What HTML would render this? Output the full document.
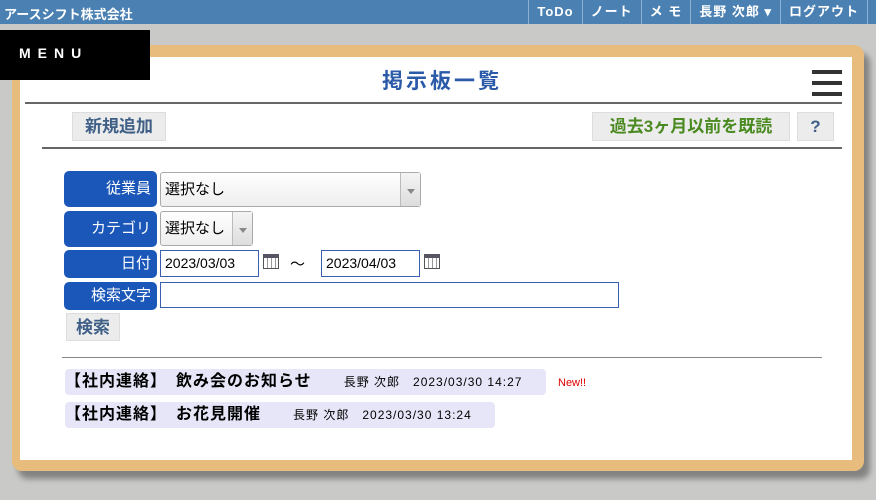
<!DOCTYPE html><html><head><meta charset="utf-8"><style>
*{margin:0;padding:0;box-sizing:border-box}
body{width:876px;height:500px;overflow:hidden;background:#c9c9c7;font-family:"Liberation Sans","Noto Sans CJK JP",sans-serif;position:relative}
.top{position:absolute;left:0;top:0;width:876px;height:24px;background:#4a80b2;color:#fff;font-size:13px;font-weight:bold}
.top .l{position:absolute;left:4px;top:4px}
.nav{position:absolute;right:0;top:0;display:flex;height:24px}
.nav div{border-left:1px solid #8fb0d0;padding:0 8px;line-height:24px;letter-spacing:1px}
.menu{position:absolute;left:0;top:30px;width:150px;height:50px;background:#000;color:#fff;font-weight:bold;font-size:14px;letter-spacing:7px;padding:15px 0 0 19px;z-index:3}
.card{position:absolute;left:12px;top:45px;width:852px;height:426px;background:#e8bc7c;border-radius:10px;box-shadow:6px 8px 6px rgba(0,0,0,.35)}
.in{position:absolute;left:20px;top:57px;width:832px;height:403px;background:#fff}
.abs{position:absolute}
.btn{background:#ececec;border:1px solid #ddd;font-weight:bold;font-size:17px;color:#3f5f86;text-align:center}
.lab{position:absolute;left:64px;width:93px;background:#1a57b8;color:#fff;border-radius:5px;text-align:right;padding-right:6px;font-size:15px}
.sel{position:absolute;border:1px solid #aaa;border-radius:3px;background:linear-gradient(#fff,#eee);font-size:15px;padding-left:4px}
.sel i{position:absolute;right:0;top:0;bottom:0;width:20px;border-left:1px solid #bbb;background:linear-gradient(#f4f4f4,#ddd)}
.sel i:after{content:"";position:absolute;left:6px;top:48%;border:4px solid transparent;border-top:5px solid #888}
.inp{position:absolute;border:1px solid #3a5fb0;font-size:14px;padding-left:4px;line-height:24px}
.item{position:absolute;left:65px;background:#e6e6f8;border-radius:4px;height:26px;font-size:16px;line-height:26px;white-space:nowrap;letter-spacing:1px}
.item s{text-decoration:none;font-size:12px;letter-spacing:1px}
.cal{position:absolute;width:16px;height:15px;border:1px solid #555;border-top:4px solid #556;background:repeating-linear-gradient(90deg,#fff 0 3px,#999 3px 4px)}
</style></head><body>
<div class="top"><span class="l">アースシフト株式会社</span>
<div class="nav"><div>ToDo</div><div>ノート</div><div>メ モ</div><div>長野 次郎 ▾</div><div>ログアウト</div><div style="padding:0 4px"></div></div></div>
<div class="menu">MENU</div>
<div class="card"></div>
<div class="in"></div>
<div class="abs" style="left:0;width:884px;top:65px;text-align:center;font-size:21px;font-weight:bold;color:#2b5ba8;letter-spacing:3px">掲示板一覧</div>
<div class="abs" style="left:812px;top:70px;width:30px;height:4px;background:#333;box-shadow:0 11px 0 #333,0 22px 0 #333"></div>
<div class="abs" style="left:25px;top:102px;width:817px;height:2px;background:#666"></div>
<div class="abs btn" style="left:72px;top:112px;width:94px;height:29px;line-height:28px">新規追加</div>
<div class="abs btn" style="left:592px;top:112px;width:198px;height:29px;line-height:28px;color:#4a8a20">過去3ヶ月以前を既読</div>
<div class="abs btn" style="left:797px;top:112px;width:37px;height:29px;line-height:28px">?</div>
<div class="abs" style="left:42px;top:147px;width:800px;height:2px;background:#666"></div>
<div class="lab" style="top:171px;height:36px;line-height:36px">従業員</div>
<div class="sel" style="left:160px;top:172px;width:261px;height:35px;line-height:34px">選択なし<i></i></div>
<div class="lab" style="top:211px;height:36px;line-height:36px">カテゴリ</div>
<div class="sel" style="left:160px;top:211px;width:93px;height:35px;line-height:34px">選択なし<i></i></div>
<div class="lab" style="top:250px;height:28px;line-height:28px">日付</div>
<div class="inp" style="left:160px;top:250px;width:99px;height:27px">2023/03/03</div>
<div class="cal" style="left:263px;top:254px"></div>
<div class="abs" style="left:290px;top:253px;font-size:15px">～</div>
<div class="inp" style="left:321px;top:250px;width:99px;height:27px">2023/04/03</div>
<div class="cal" style="left:424px;top:254px"></div>
<div class="lab" style="top:282px;height:28px;line-height:28px">検索文字</div>
<div class="inp" style="left:160px;top:282px;width:459px;height:26px"></div>
<div class="abs btn" style="left:66px;top:313px;width:54px;height:28px;line-height:27px">検索</div>
<div class="abs" style="left:62px;top:357px;width:760px;height:1px;background:#888"></div>
<div class="item" style="top:369px;width:481px"><b>【社内連絡】　飲み会のお知らせ</b><s style="margin-left:32px">長野 次郎　2023/03/30 14:27</s></div>
<div class="abs" style="left:558px;top:377px;font-size:11px;color:#d00">New!!</div>
<div class="item" style="top:402px;width:430px"><b>【社内連絡】　お花見開催</b><s style="margin-left:32px">長野 次郎　2023/03/30 13:24</s></div>
</body></html>
